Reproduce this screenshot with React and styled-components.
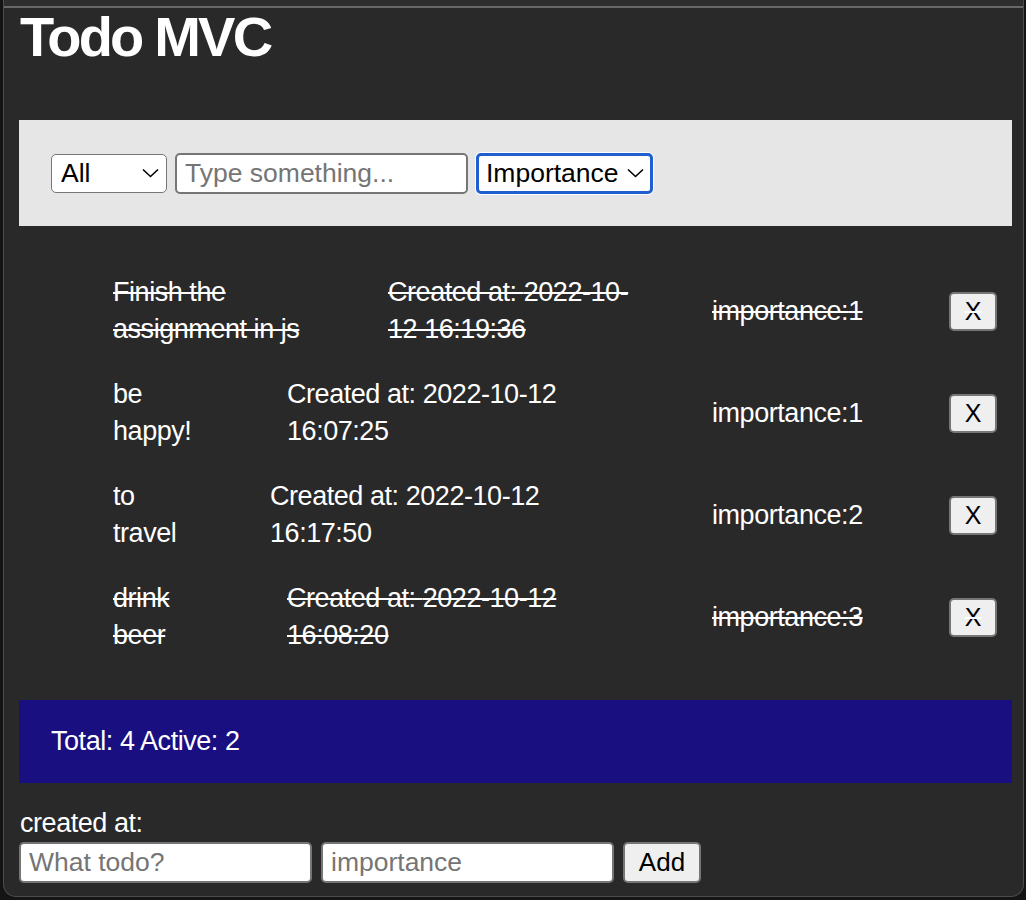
import React from 'react';
import styled, { createGlobalStyle } from 'styled-components';

const GlobalStyle = createGlobalStyle`
  html, body {
    margin: 0;
    padding: 0;
    background: #141414;
  }
  body {
    font-family: "Liberation Sans", Arial, sans-serif;
    color: #fff;
  }
`;

const Window = styled.div`
  width: 1019px;
  height: 896px;
  margin-left: 3px;
  background: #292929;
  border: 1px solid #4c4c4c;
  border-top: none;
  border-radius: 0 0 13px 13px;
  overflow: hidden;
`;

const TopStrip = styled.div`
  height: 6px;
  background: #2e2e2e;
  border-bottom: 2px solid #686868;
`;

const Main = styled.main`
  padding: 0 11px 0 15px;
`;

const Title = styled.h1`
  margin: 0 0 55px 1px;
  font-size: 56px;
  line-height: 57px;
  font-weight: 700;
  letter-spacing: -2.8px;
`;

const FilterBar = styled.div`
  height: 106px;
  padding: 0 32px;
  background: #e6e6e6;
  display: flex;
  align-items: center;
  gap: 8px;
`;

const SelectWrap = styled.div`
  position: relative;
  display: flex;
`;

const Select = styled.select`
  appearance: none;
  width: ${p => p.$w}px;
  height: ${p => p.$h}px;
  padding: 0 0 0 ${p => (p.$focused ? 7 : 9)}px;
  font-family: "Liberation Sans", Arial, sans-serif;
  font-size: 26.5px;
  color: #000;
  background: #fff;
  border: ${p => (p.$focused ? '3px solid #1f5fcf' : '1px solid #767676')};
  box-shadow: ${p => (p.$focused ? '0 0 0 1px #fff' : 'none')};
  border-radius: 5px;
  outline: none;
`;

const Chevron = styled.svg`
  position: absolute;
  right: ${p => p.$r}px;
  top: 50%;
  margin-top: -5px;
  width: 17px;
  height: 10px;
  pointer-events: none;
`;

const TextInput = styled.input`
  box-sizing: border-box;
  width: ${p => p.$w}px;
  height: 41px;
  padding: 0 8px;
  font-family: "Liberation Sans", Arial, sans-serif;
  font-size: 26.5px;
  color: #000;
  background: #fff;
  border: 2px solid #767676;
  border-radius: 5px;
  outline: none;

  &::placeholder {
    color: #757575;
  }
`;

const List = styled.ul`
  margin: 0;
  padding: 34px 15px 32px 94px;
  list-style: none;
`;

const Row = styled.li`
  display: flex;
  align-items: center;
  padding: 14px 0;
  font-size: 27px;
  line-height: 37px;
  letter-spacing: -0.45px;
  text-decoration: ${p => (p.$done ? 'line-through' : 'none')};
`;

const ItemTitle = styled.span`
  box-sizing: border-box;
  flex: none;
  width: ${p => p.$w}px;
  padding-right: 80px;
`;

const Created = styled.span`
  flex: none;
  width: ${p => p.$w}px;
`;

const Importance = styled.span`
  flex: none;
  width: 237px;
  margin-left: auto;
`;

const DeleteButton = styled.button`
  flex: none;
  width: 48px;
  height: 39px;
  padding: 0;
  font-family: "Liberation Sans", Arial, sans-serif;
  font-size: 25px;
  letter-spacing: 0;
  color: #000;
  background: #efefef;
  border: 2px solid #767676;
  border-radius: 5px;
`;

const Footer = styled.div`
  height: 83px;
  padding-left: 32px;
  display: flex;
  align-items: center;
  background: #1a0f80;
  font-size: 27px;
  letter-spacing: -0.45px;
`;

const Label = styled.div`
  margin: 22px 0 0 1px;
  font-size: 27px;
  line-height: 37px;
  letter-spacing: -0.45px;
`;

const AddForm = styled.form`
  display: flex;
  gap: 9px;
`;

const AddButton = styled.button`
  width: 78px;
  height: 41px;
  padding: 0;
  font-family: "Liberation Sans", Arial, sans-serif;
  font-size: 26px;
  color: #000;
  background: #efefef;
  border: 2px solid #767676;
  border-radius: 5px;
`;

const todos = [
  { title: 'Finish the assignment in js', created: '2022-10-12 16:19:36', importance: 1, done: true, tw: 275, cw: 255 },
  { title: 'be happy!', created: '2022-10-12 16:07:25', importance: 1, done: false, tw: 174, cw: 330 },
  { title: 'to travel', created: '2022-10-12 16:17:50', importance: 2, done: false, tw: 157, cw: 330 },
  { title: 'drink beer', created: '2022-10-12 16:08:20', importance: 3, done: true, tw: 174, cw: 330 },
];

const ChevronIcon = ({ right }) => (
  <Chevron $r={right} viewBox="0 0 17 10">
    <path d="M1 1.5 L8.5 8.5 L16 1.5" fill="none" stroke="#000" strokeWidth="1.6" />
  </Chevron>
);

const App = () => {
  const active = todos.filter(t => !t.done).length;
  return (
    <Window>
      <GlobalStyle />
      <TopStrip />
      <Main>
        <Title>Todo MVC</Title>

        <FilterBar>
          <SelectWrap>
            <Select $w={116} $h={39} defaultValue="all">
              <option value="all">All</option>
              <option value="active">Active</option>
              <option value="completed">Completed</option>
            </Select>
            <ChevronIcon right={8} />
          </SelectWrap>
          <TextInput $w={293} placeholder="Type something..." />
          <SelectWrap>
            <Select $w={177} $h={41} $focused defaultValue="importance">
              <option value="importance">Importance</option>
              <option value="date">Date</option>
            </Select>
            <ChevronIcon right={9} />
          </SelectWrap>
        </FilterBar>

        <List>
          {todos.map(t => (
            <Row key={t.title} $done={t.done}>
              <ItemTitle $w={t.tw}>{t.title}</ItemTitle>
              <Created $w={t.cw}>Created at: {t.created}</Created>
              <Importance>importance:{t.importance}</Importance>
              <DeleteButton type="button">X</DeleteButton>
            </Row>
          ))}
        </List>

        <Footer>Total: {todos.length} Active: {active}</Footer>

        <Label>created at:</Label>
        <AddForm onSubmit={e => e.preventDefault()}>
          <TextInput $w={293} placeholder="What todo?" />
          <TextInput $w={293} placeholder="importance" />
          <AddButton type="submit">Add</AddButton>
        </AddForm>
      </Main>
    </Window>
  );
};

export default App;
